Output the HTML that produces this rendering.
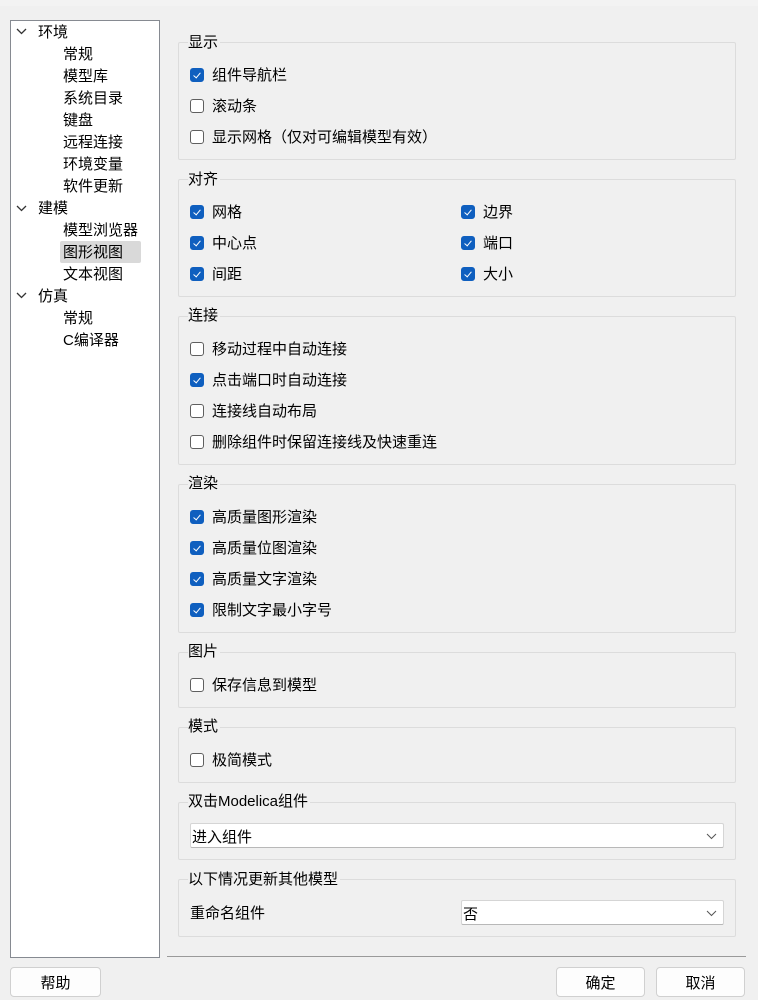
<!DOCTYPE html>
<html><head><meta charset="utf-8"><style>
*{margin:0;padding:0;box-sizing:border-box}
body{width:758px;height:989px;background:#f0f0f0;position:relative;overflow:hidden;font-family:"Liberation Sans","Noto Sans CJK SC",sans-serif;font-size:15px;color:#000}
.a{position:absolute;white-space:nowrap;line-height:20px;margin-top:1px}
.tree{position:absolute;left:10px;top:20px;width:150px;height:938px;background:#fff;border:1px solid #868a91}
.g{position:absolute;left:178px;width:558px;border:1px solid #dcdcdc;border-radius:2px}
.gt{position:absolute;left:188px;background:#f0f0f0;padding:0 2px 0 0;line-height:18px}
.cb{position:absolute;width:14px;height:14px;border:1px solid #5f5f5f;border-radius:3px;background:#fff}
.cb.on{background:#0f5fbf;border-color:#0f5fbf}
.cb.on::after{content:"";position:absolute;left:4px;top:2px;width:3px;height:6px;border:solid #fff;border-width:0 1.3px 1.3px 0;transform:rotate(40deg)}
.combo{position:absolute;height:25px;background:#fff;border:1px solid #d5d5d5;border-bottom-color:#b8b8b8;border-radius:2px}
.combo span{position:absolute;left:1px;top:2px}
.combo svg{position:absolute;right:6px;top:9px}
.btn{position:absolute;top:967px;height:30px;background:#fdfdfd;border:1px solid #d0d0d0;border-radius:4px;text-align:center;line-height:32px}
.chev{position:absolute}
</style></head><body>
<div style="position:absolute;left:0;top:0;width:758px;height:6px;background:#f3f3f3"></div>
<div class="tree"></div>
<div style="position:absolute;left:60px;top:241px;width:81px;height:22px;background:#d9d9d9;border-radius:2px"></div>
<svg class="chev" style="left:16px;top:28px" width="11" height="7"><path d="M1 1 L5.5 5.5 L10 1" fill="none" stroke="#333" stroke-width="1.3"/></svg>
<svg class="chev" style="left:16px;top:205px" width="11" height="7"><path d="M1 1 L5.5 5.5 L10 1" fill="none" stroke="#333" stroke-width="1.3"/></svg>
<svg class="chev" style="left:16px;top:292px" width="11" height="7"><path d="M1 1 L5.5 5.5 L10 1" fill="none" stroke="#333" stroke-width="1.3"/></svg>
<div class="a" style="left:38px;top:22px">环境</div>
<div class="a" style="left:63px;top:44px">常规</div>
<div class="a" style="left:63px;top:66px">模型库</div>
<div class="a" style="left:63px;top:88px">系统目录</div>
<div class="a" style="left:63px;top:110px">键盘</div>
<div class="a" style="left:63px;top:132px">远程连接</div>
<div class="a" style="left:63px;top:154px">环境变量</div>
<div class="a" style="left:63px;top:176px">软件更新</div>
<div class="a" style="left:38px;top:198px">建模</div>
<div class="a" style="left:63px;top:220px">模型浏览器</div>
<div class="a" style="left:63px;top:242px">图形视图</div>
<div class="a" style="left:63px;top:264px">文本视图</div>
<div class="a" style="left:38px;top:286px">仿真</div>
<div class="a" style="left:63px;top:308px">常规</div>
<div class="a" style="left:63px;top:330px">C编译器</div>

<div class="g" style="top:42px;height:118px"></div><div class="gt a" style="top:33px">显示</div>
<div class="cb on" style="left:190px;top:68px"></div><div class="a" style="left:212px;top:65px">组件导航栏</div>
<div class="cb" style="left:190px;top:99px"></div><div class="a" style="left:212px;top:96px">滚动条</div>
<div class="cb" style="left:190px;top:130px"></div><div class="a" style="left:212px;top:127px">显示网格（仅对可编辑模型有效）</div>

<div class="g" style="top:179px;height:118px"></div><div class="gt a" style="top:170px">对齐</div>
<div class="cb on" style="left:190px;top:205px"></div><div class="a" style="left:212px;top:202px">网格</div>
<div class="cb on" style="left:190px;top:236px"></div><div class="a" style="left:212px;top:233px">中心点</div>
<div class="cb on" style="left:190px;top:267px"></div><div class="a" style="left:212px;top:264px">间距</div>
<div class="cb on" style="left:461px;top:205px"></div><div class="a" style="left:483px;top:202px">边界</div>
<div class="cb on" style="left:461px;top:236px"></div><div class="a" style="left:483px;top:233px">端口</div>
<div class="cb on" style="left:461px;top:267px"></div><div class="a" style="left:483px;top:264px">大小</div>

<div class="g" style="top:316px;height:149px"></div><div class="gt a" style="top:306px">连接</div>
<div class="cb" style="left:190px;top:342px"></div><div class="a" style="left:212px;top:339px">移动过程中自动连接</div>
<div class="cb on" style="left:190px;top:373px"></div><div class="a" style="left:212px;top:370px">点击端口时自动连接</div>
<div class="cb" style="left:190px;top:404px"></div><div class="a" style="left:212px;top:401px">连接线自动布局</div>
<div class="cb" style="left:190px;top:435px"></div><div class="a" style="left:212px;top:432px">删除组件时保留连接线及快速重连</div>

<div class="g" style="top:484px;height:149px"></div><div class="gt a" style="top:474px">渲染</div>
<div class="cb on" style="left:190px;top:510px"></div><div class="a" style="left:212px;top:507px">高质量图形渲染</div>
<div class="cb on" style="left:190px;top:541px"></div><div class="a" style="left:212px;top:538px">高质量位图渲染</div>
<div class="cb on" style="left:190px;top:572px"></div><div class="a" style="left:212px;top:569px">高质量文字渲染</div>
<div class="cb on" style="left:190px;top:603px"></div><div class="a" style="left:212px;top:600px">限制文字最小字号</div>

<div class="g" style="top:652px;height:56px"></div><div class="gt a" style="top:642px">图片</div>
<div class="cb" style="left:190px;top:678px"></div><div class="a" style="left:212px;top:675px">保存信息到模型</div>

<div class="g" style="top:727px;height:56px"></div><div class="gt a" style="top:717px">模式</div>
<div class="cb" style="left:190px;top:753px"></div><div class="a" style="left:212px;top:750px">极简模式</div>

<div class="g" style="top:802px;height:58px"></div><div class="gt a" style="top:792px">双击Modelica组件</div>
<div class="combo" style="left:190px;top:823px;width:534px"><span>进入组件</span><svg width="11" height="7"><path d="M1 1 L5.5 5.5 L10 1" fill="none" stroke="#555" stroke-width="1"/></svg></div>

<div class="g" style="top:879px;height:58px"></div><div class="gt a" style="top:870px">以下情况更新其他模型</div>
<div class="a" style="left:190px;top:903px">重命名组件</div>
<div class="combo" style="left:461px;top:900px;width:263px"><span>否</span><svg width="11" height="7"><path d="M1 1 L5.5 5.5 L10 1" fill="none" stroke="#555" stroke-width="1"/></svg></div>

<div style="position:absolute;left:167px;top:956px;width:579px;height:1px;background:#9a9a9a"></div>
<div class="btn" style="left:10px;width:91px">帮助</div>
<div class="btn" style="left:556px;width:89px">确定</div>
<div class="btn" style="left:656px;width:89px">取消</div>
</body></html>
